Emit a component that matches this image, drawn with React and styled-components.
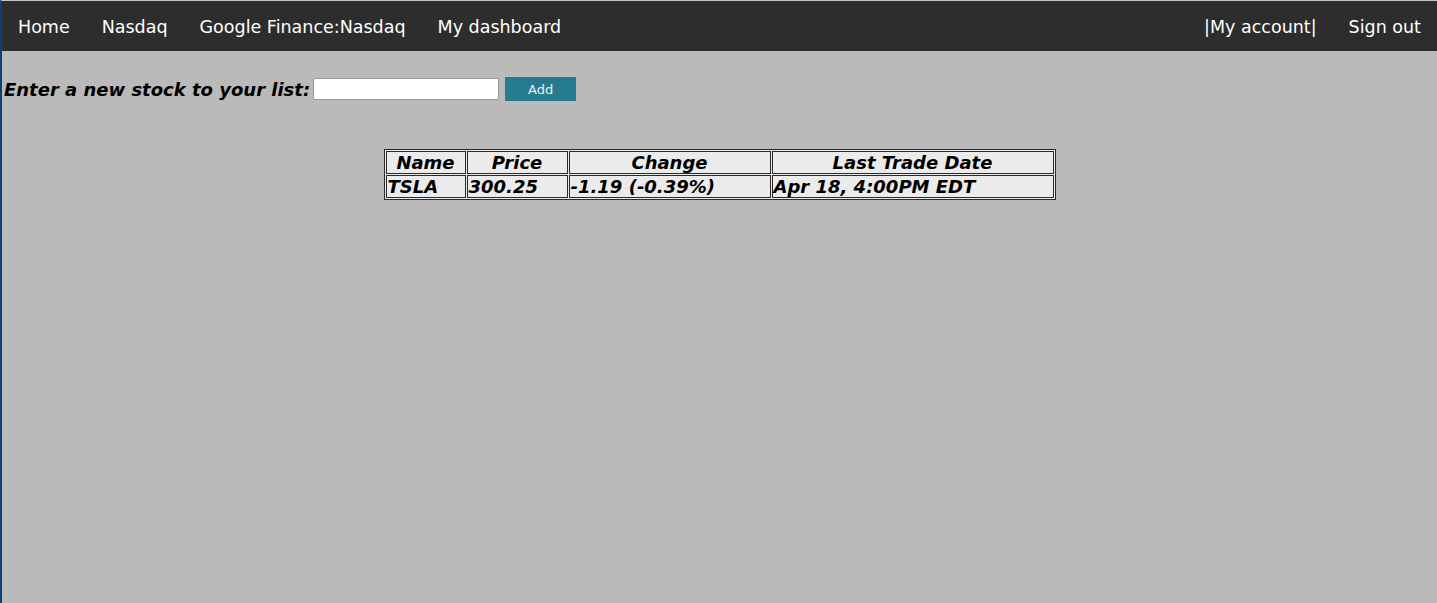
import styled, { createGlobalStyle } from 'styled-components';

const GlobalStyle = createGlobalStyle`
  html, body {
    margin: 0;
    padding: 0;
    background: #bababa;
  }
  body {
    font-family: "DejaVu Sans", Verdana, sans-serif;
  }
`

const stocks = [
  { name: 'TSLA', price: '300.25', change: '-1.19 (-0.39%)', date: 'Apr 18, 4:00PM EDT' },
];

const Page = styled.div`
  min-height: 603px;
  box-sizing: border-box;
  border-left: 2px solid #0c3f74;
  border-top: 1px solid #c4c4c4;
  background: #bababa;
`

const NavBar = styled.nav`
  display: flex;
  justify-content: space-between;
  align-items: center;
  height: 50px;
  background: #2d2d2d;
`

const NavGroup = styled.div`
  display: flex;
  align-items: center;
`

const NavLink = styled.a`
  color: #ffffff;
  font-size: 17.5px;
  text-decoration: none;
  padding: 2px 16px 0;
  line-height: 48px;
  cursor: pointer;
`

const AddForm = styled.form`
  display: flex;
  align-items: center;
  padding: 26px 0 0 2px;
`

const Label = styled.label`
  font-size: 18px;
  font-weight: bold;
  font-style: italic;
  color: #000;
  margin-right: 3px;
`

const StockInput = styled.input`
  width: 186px;
  height: 22px;
  box-sizing: border-box;
  border: 1px solid #9a9a9a;
  border-radius: 2px;
  background: #fff;
  margin: 0 6px 0 0;
`

const AddButton = styled.button`
  width: 71px;
  height: 24px;
  border: none;
  background: #267b8f;
  color: #e8f2f4;
  font-family: "DejaVu Sans", Verdana, sans-serif;
  font-size: 13px;
  cursor: pointer;
`

const TableWrap = styled.div`
  display: flex;
  justify-content: center;
  padding-top: 48px;
`

const StockTable = styled.table`
  border: 1px solid #2a2a2a;
  border-collapse: separate;
  border-spacing: 1px;
  background: #ebebeb;
  font-size: 18px;
  font-weight: bold;
  font-style: italic;
`

const HeadCell = styled.th`
  border: 1px solid #2a2a2a;
  padding: 0 1px;
  width: ${p => p.$w}px;
  text-align: center;
  font-weight: bold;
  box-sizing: border-box;
`

const Cell = styled.td`
  border: 1px solid #2a2a2a;
  padding: 0 1px;
  text-align: left;
  white-space: nowrap;
`

const App = () => {
  return (
    <Page>
      <GlobalStyle />
      <NavBar>
        <NavGroup>
          <NavLink>Home</NavLink>
          <NavLink>Nasdaq</NavLink>
          <NavLink>Google Finance:Nasdaq</NavLink>
          <NavLink>My dashboard</NavLink>
        </NavGroup>
        <NavGroup>
          <NavLink>|My account|</NavLink>
          <NavLink>Sign out</NavLink>
        </NavGroup>
      </NavBar>

      <AddForm onSubmit={e => e.preventDefault()}>
        <Label>Enter a new stock to your list:</Label>
        <StockInput type="text" />
        <AddButton type="submit">Add</AddButton>
      </AddForm>

      <TableWrap>
        <StockTable>
          <thead>
            <tr>
              <HeadCell $w={80}>Name</HeadCell>
              <HeadCell $w={101}>Price</HeadCell>
              <HeadCell $w={202}>Change</HeadCell>
              <HeadCell $w={282}>Last Trade Date</HeadCell>
            </tr>
          </thead>
          <tbody>
            {stocks.map(s => (
              <tr key={s.name}>
                <Cell>{s.name}</Cell>
                <Cell>{s.price}</Cell>
                <Cell>{s.change}</Cell>
                <Cell>{s.date}</Cell>
              </tr>
            ))}
          </tbody>
        </StockTable>
      </TableWrap>
    </Page>
  )
}
export default App;
